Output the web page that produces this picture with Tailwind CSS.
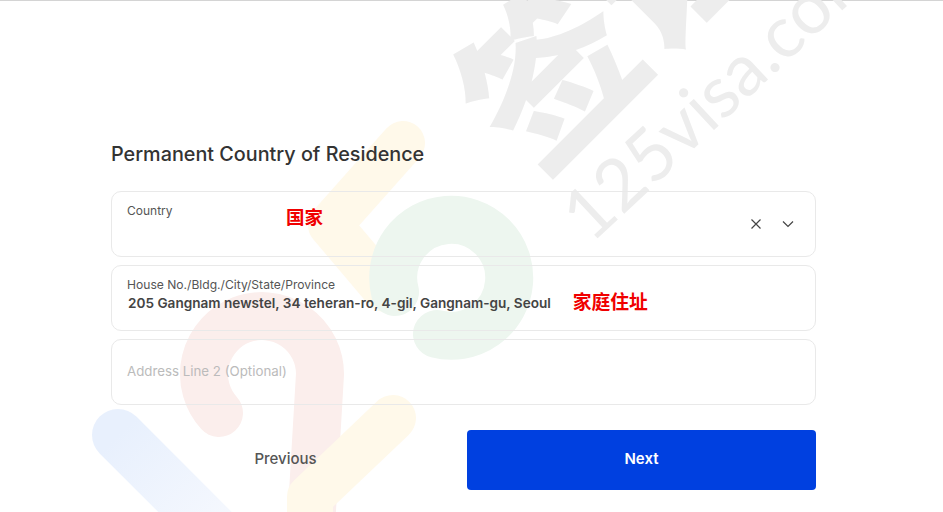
<!DOCTYPE html>
<html lang="en">

<head>
    <meta charset="UTF-8" />
    <title>Permanent Country of Residence</title>
    <script src="https://cdn.jsdelivr.net/npm/@tailwindcss/browser@4"></script>
</head>

<body class="relative h-[512px] w-[943px] overflow-hidden bg-white font-['Inter','Noto_Sans_CJK_SC',sans-serif]">

    <!-- watermark: logo -->
    <svg class="absolute left-0 top-0" width="943" height="512" fill="none" stroke-linecap="round" stroke-linejoin="round">
        <defs>
            <linearGradient id="blueFade" gradientUnits="userSpaceOnUse" x1="118" y1="435" x2="215" y2="532">
                <stop offset="0" stop-color="#e8f0fd" />
                <stop offset="1" stop-color="#f5f8fe" />
            </linearGradient>
        </defs>
        <path d="M403 143 L330 225 L385 290" stroke="#fff9ea" stroke-width="44" />
        <path d="M219 413 A58 58 0 1 1 320 374 L312 510" stroke="#fbeeec" stroke-width="48" />
        <path d="M395 292 A58 58 0 1 1 437 334" stroke="#edf6ef" stroke-width="48" />
        <path d="M118 435 L215 532" stroke="url(#blueFade)" stroke-width="52" />
        <path d="M393 418 L310 497 L310 530" stroke="#fff9ea" stroke-width="46" />
    </svg>

    <!-- watermark: text -->
    <div class="absolute left-[443px] top-[-70px] origin-center -rotate-45 text-[170px] leading-none font-black text-[#ededed]">签证</div>
    <div class="absolute left-[572px] top-[188px] origin-left -rotate-[43deg] text-[72px] leading-none font-['Lato',sans-serif] text-[#ededed]">125visa.com</div>

    <div class="h-px bg-[#d4d4d4]"></div>

    <main class="relative ml-[111px] w-[705px] pt-[141px]">
        <h1 class="h-[24px] text-[19.8px] leading-[24px] font-medium text-[#333333]">Permanent Country of Residence</h1>

        <div class="mt-[25px] flex flex-col gap-2">
            <div class="relative flex h-[66px] justify-between rounded-[10px] border border-[#e9e9e9] pl-[15px] pr-[19px]">
                <span class="mt-[11px] text-xs leading-[15px] text-[#555555]">Country</span>
                <span class="absolute left-[174px] top-[13px] text-[18.5px] leading-6 font-bold text-[#f00000]">国家</span>
                <div class="flex items-center gap-[16px]">
                    <svg width="16" height="16" viewBox="0 0 16 16" fill="none" stroke="#444444" stroke-width="1.2">
                        <path d="M3.5 3.5 L12.5 12.5 M12.5 3.5 L3.5 12.5" />
                    </svg>
                    <svg width="16" height="16" viewBox="0 0 16 16" fill="none" stroke="#444444" stroke-width="1.2">
                        <path d="M3 5.5 L8 10.5 L13 5.5" />
                    </svg>
                </div>
            </div>

            <div class="flex h-[66px] flex-col rounded-[10px] border border-[#e9e9e9] px-[15px] pt-[11px]">
                <span class="text-[12.1px] leading-[15px] text-[#555555]">House No./Bldg./City/State/Province</span>
                <div class="flex items-center">
                    <span class="ml-px text-[13.6px] leading-[20px] font-semibold text-[#444444]">205 Gangnam newstel, 34 teheran-ro, 4-gil, Gangnam-gu, Seoul</span>
                    <span class="ml-[22px] mt-px text-[18.75px] leading-[20px] font-bold text-[#f00000]">家庭住址</span>
                </div>
            </div>

            <div class="flex h-[66px] items-center rounded-[10px] border border-[#e9e9e9] px-[15px] pb-[1px]">
                <span class="text-[13.3px] text-[#bbbbbb]">Address Line 2 (Optional)</span>
            </div>
        </div>

        <div class="mt-[25px] flex gap-[7px]">
            <button class="h-[60px] flex-1 rounded pb-[2px] text-[15px] font-medium text-[#555555]">Previous</button>
            <button class="h-[60px] w-[349px] rounded bg-[#0040e0] pb-[2px] text-[15px] font-semibold text-white">Next</button>
        </div>
    </main>
</body>

</html>
